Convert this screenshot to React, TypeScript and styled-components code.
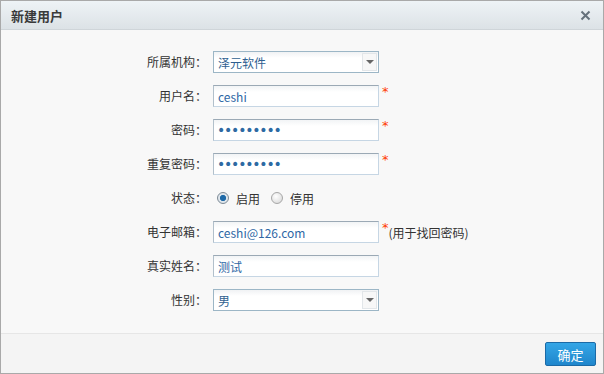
import styled, { createGlobalStyle } from "styled-components";

const GlobalStyle = createGlobalStyle`
  html, body {
    margin: 0;
    padding: 0;
    background: #ffffff;
  }
  body {
    font-family: "DejaVu Sans", "Noto Sans CJK SC", sans-serif;
  }
`;

const cjk = `"Noto Sans CJK SC", "DejaVu Sans", sans-serif`;

const Dialog = styled.div`
  width: 604px;
  height: 374px;
  box-sizing: border-box;
  border: 1px solid #a9a9a9;
  display: flex;
  flex-direction: column;
  background: #f8f8f8;
`;

const TitleBar = styled.div`
  height: 29px;
  flex: none;
  box-sizing: border-box;
  display: flex;
  align-items: center;
  justify-content: space-between;
  padding: 0 12px 0 10px;
  background: linear-gradient(#eef3f6, #dce2e6);
  border-bottom: 1px solid #cfd5d9;
`;

const Title = styled.div`
  font-family: ${cjk};
  font-size: 13px;
  font-weight: bold;
  color: #3a3a3a;
`;

const Close = styled.div`
  width: 12px;
  height: 12px;
  display: flex;
  align-items: center;
  justify-content: center;
`;

const Body = styled.div`
  flex: 1;
  padding-top: 21px;
`;

const Form = styled.div`
  display: grid;
  grid-template-columns: 206px auto;
  column-gap: 6px;
  row-gap: 12px;
  align-items: center;
`;

const Label = styled.div`
  font-family: ${cjk};
  font-size: 12px;
  color: #333;
  text-align: right;
  line-height: 22px;
`;

const Field = styled.div`
  display: flex;
  align-items: center;
  height: 22px;
`;

const TextBox = styled.input`
  width: 166px;
  height: 22px;
  box-sizing: border-box;
  margin: 0;
  padding: 0 4px;
  border: 1px solid #c6d6e4;
  border-top-color: #9ba9b5;
  border-left-color: #b2c0cb;
  background: linear-gradient(#f2f4f6, #ffffff 6px);
  font-family: ${cjk};
  font-size: 12px;
  color: #2f67a5;
  outline: none;

  &[type="password"] {
    font-family: "DejaVu Sans", sans-serif;
    font-size: 14px;
    letter-spacing: -1.2px;
    color: #2d6aa3;
    padding-left: 3px;
  }
`;

const SelectBox = styled.div`
  width: 166px;
  height: 22px;
  box-sizing: border-box;
  border: 1px solid #9cb6c6;
  background: linear-gradient(#f0f2f4, #ffffff 6px);
  display: flex;
  align-items: center;
  justify-content: space-between;
  padding: 0 1px 0 4px;
  font-family: ${cjk};
  font-size: 12px;
  color: #2f5f90;
`;

const Arrow = styled.div`
  width: 15px;
  height: 18px;
  box-sizing: border-box;
  border: 1px solid #e2e6e9;
  background: #f7f7f7;
  display: flex;
  align-items: center;
  justify-content: center;

  &::after {
    content: "";
    border-left: 4px solid transparent;
    border-right: 4px solid transparent;
    border-top: 4px solid #666;
  }
`;

const Star = styled.span`
  color: #ff3b00;
  font-family: "DejaVu Sans", sans-serif;
  font-size: 13px;
  margin-left: 3px;
  align-self: flex-start;
  line-height: 14px;
`;

const Hint = styled.span`
  font-family: ${cjk};
  font-size: 12px;
  color: #333;
`;

const RadioGroup = styled.div`
  display: flex;
  align-items: center;
  height: 22px;
  padding-left: 4px;
`;

const Radio = styled.span<{ $on?: boolean }>`
  width: 12px;
  height: 12px;
  box-sizing: border-box;
  border-radius: 50%;
  border: 1px solid ${(p) => (p.$on ? "#7d8a95" : "#a7a7a7")};
  background: ${(p) =>
    p.$on
      ? "radial-gradient(circle, #1f6aa8 0 2.8px, #dfe6ec 3.3px)"
      : "radial-gradient(circle at 40% 35%, #ffffff, #d5d5d5)"};
  margin-right: 7px;
`;

const RadioText = styled.span`
  font-family: ${cjk};
  font-size: 12px;
  color: #333;
  margin-right: 11px;
`;

const Footer = styled.div`
  height: 40px;
  flex: none;
  box-sizing: border-box;
  border-top: 1px solid #e6e6e6;
  background: #f4f4f4;
  display: flex;
  align-items: center;
  justify-content: flex-end;
  padding-right: 7px;
`;

const Button = styled.button`
  width: 51px;
  height: 24px;
  border: 1px solid #1b6aa6;
  border-radius: 2px;
  background: linear-gradient(#34a6e6, #1f86cc);
  color: #fff;
  font-family: ${cjk};
  font-size: 13px;
  padding: 0;
  margin-top: 1px;
  cursor: pointer;
`;

export default function App() {
  return (
    <>
      <GlobalStyle />
      <Dialog>
        <TitleBar>
          <Title>新建用户</Title>
          <Close>
            <svg width="11" height="11" viewBox="0 0 11 11">
              <path d="M1.5 1.5 L9.5 9.5 M9.5 1.5 L1.5 9.5" stroke="#65717b" strokeWidth="2" />
            </svg>
          </Close>
        </TitleBar>
        <Body>
          <Form>
            <Label>所属机构：</Label>
            <Field>
              <SelectBox>
                泽元软件
                <Arrow />
              </SelectBox>
            </Field>

            <Label>用户名：</Label>
            <Field>
              <TextBox defaultValue="ceshi" />
              <Star>*</Star>
            </Field>

            <Label>密码：</Label>
            <Field>
              <TextBox type="password" defaultValue="123456789" />
              <Star>*</Star>
            </Field>

            <Label>重复密码：</Label>
            <Field>
              <TextBox type="password" defaultValue="123456789" />
              <Star>*</Star>
            </Field>

            <Label>状态：</Label>
            <RadioGroup>
              <Radio $on />
              <RadioText>启用</RadioText>
              <Radio />
              <RadioText>停用</RadioText>
            </RadioGroup>

            <Label>电子邮箱：</Label>
            <Field>
              <TextBox defaultValue="ceshi@126.com" />
              <Star>*</Star>
              <Hint>(用于找回密码)</Hint>
            </Field>

            <Label>真实姓名：</Label>
            <Field>
              <TextBox defaultValue="测试" />
            </Field>

            <Label>性别：</Label>
            <Field>
              <SelectBox>
                男
                <Arrow />
              </SelectBox>
            </Field>
          </Form>
        </Body>
        <Footer>
          <Button>确定</Button>
        </Footer>
      </Dialog>
    </>
  );
}
